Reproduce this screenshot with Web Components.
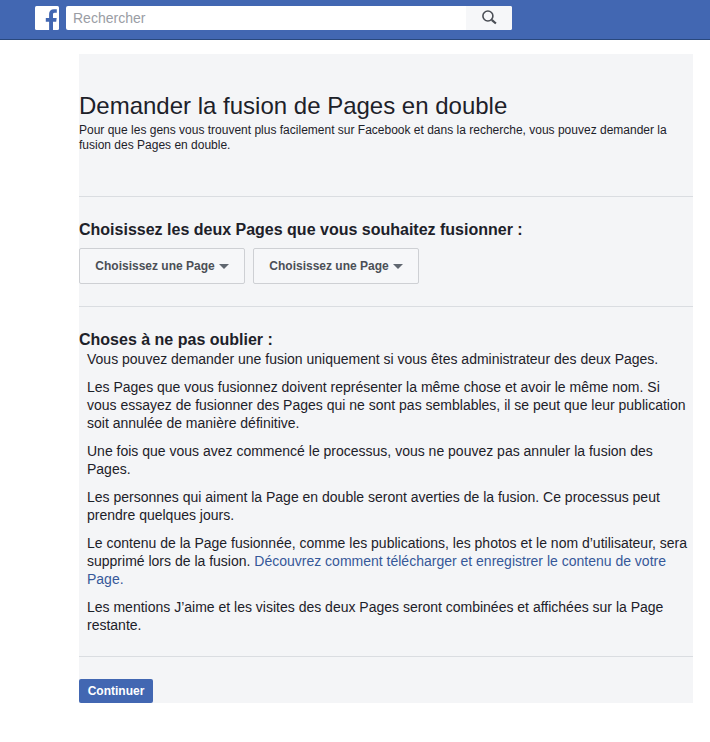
<!DOCTYPE html>
<html lang="fr">
<head>
<meta charset="utf-8">
<title>Demander la fusion de Pages en double</title>
<style>
  html, body { margin: 0; padding: 0; background: #fff; }
  body { font-family: "Liberation Sans", Arial, sans-serif; color: #1d2129; }
</style>
</head>
<body>
<fb-header></fb-header>
<merge-panel>
  <panel-section slot="intro" pad="38px 0 43px">
    <h-title>Demander la fusion de Pages en double</h-title>
    <small-text>Pour que les gens vous trouvent plus facilement sur Facebook et dans la recherche, vous pouvez demander la fusion des Pages en double.</small-text>
  </panel-section>
  <panel-section slot="pick" pad="24px 0 22px" line>
    <h-sub>Choisissez les deux Pages que vous souhaitez fusionner :</h-sub>
    <pick-row>
      <page-select>Choisissez une Page</page-select>
      <page-select>Choisissez une Page</page-select>
    </pick-row>
  </panel-section>
  <panel-section slot="notes" pad="24px 0 12px" line>
    <h-sub>Choses à ne pas oublier :</h-sub>
    <note-list>
      <p>Vous pouvez demander une fusion uniquement si vous êtes administrateur des deux Pages.</p>
      <p>Les Pages que vous fusionnez doivent représenter la même chose et avoir le même nom. Si vous essayez de fusionner des Pages qui ne sont pas semblables, il se peut que leur publication soit annulée de manière définitive.</p>
      <p>Une fois que vous avez commencé le processus, vous ne pouvez pas annuler la fusion des Pages.</p>
      <p>Les personnes qui aiment la Page en double seront averties de la fusion. Ce processus peut prendre quelques jours.</p>
      <p>Le contenu de la Page fusionnée, comme les publications, les photos et le nom d’utilisateur, sera supprimé lors de la fusion. <a>Découvrez comment télécharger et enregistrer le contenu de votre Page.</a></p>
      <p>Les mentions J’aime et les visites des deux Pages seront combinées et affichées sur la Page restante.</p>
    </note-list>
  </panel-section>
  <panel-section slot="foot" pad="22px 0 0" line>
    <blue-button>Continuer</blue-button>
  </panel-section>
</merge-panel>

<script>
function simple(name, css, html) {
  customElements.define(name, class extends HTMLElement {
    constructor() {
      super();
      this.attachShadow({ mode: 'open' });
      this.shadowRoot.innerHTML = '<style>' + css + '</style>' + (html || '<slot></slot>');
    }
  });
}

simple('fb-header', `
  :host { display: flex; box-sizing: border-box; height: 40px; padding: 6px 0 0 35px; gap: 7px;
          background: #4267b2; border-bottom: 1px solid #29487d; }
  .logo { width: 24px; height: 24px; display: block; }
  .search { display: flex; width: 446px; height: 24px; background: #fff; border-radius: 2px; overflow: hidden; }
  .ph { flex: 1; font: 14px/24px "Liberation Sans", Arial, sans-serif; color: #9a9da4; padding-left: 7px; }
  .btn { width: 46px; background: #f6f7f9; display: flex; align-items: center; justify-content: center; }
`, `
  <svg class="logo" viewBox="0 0 24 24">
    <rect width="24" height="24" rx="1.5" fill="#fff"/>
    <path fill="#4267b2" d="M18 24v-8.2h3.2l.5-3.8h-3.7V8.6c0-1.1.3-1.8 1.8-1.8h2V3.3c-.4-.05-1.5-.15-2.9-.15-2.9 0-4.8 1.75-4.8 4.95V12H10.8v3.8h3.3V24z"/>
  </svg>
  <div class="search">
    <div class="ph">Rechercher</div>
    <div class="btn">
      <svg width="16" height="16" viewBox="0 0 16 16" fill="none" stroke="#4b4f56">
        <circle cx="6.9" cy="6" r="5" stroke-width="1.6"/>
        <path d="M10.7 9.8l4.2 3.7" stroke-width="2.2"/>
      </svg>
    </div>
  </div>
`);

simple('merge-panel', `
  :host { display: block; box-sizing: border-box; width: 614px; height: 649px; margin: 14px 0 0 79px; background: #f4f5f7; }
`, `<slot name="intro"></slot><slot name="pick"></slot><slot name="notes"></slot><slot name="foot"></slot>`);

customElements.define('panel-section', class extends HTMLElement {
  constructor() {
    super();
    this.attachShadow({ mode: 'open' });
    const pad = this.getAttribute('pad') || '0';
    const line = this.hasAttribute('line') ? 'border-top: 1px solid #dadde1;' : '';
    this.shadowRoot.innerHTML = '<style>:host { display: block; padding: ' + pad + '; ' + line + ' }</style><slot></slot>';
  }
});

simple('h-title', `
  :host { display: block; font: 24px/28px "Liberation Sans", Arial, sans-serif; color: #1d2129; }
`);
simple('small-text', `
  :host { display: block; font: 12px/15px "Liberation Sans", Arial, sans-serif; color: #1d2129; margin-top: 3px; }
`);
simple('h-sub', `
  :host { display: block; font: bold 16px/18px "Liberation Sans", Arial, sans-serif; color: #1d2129; }
`);
simple('pick-row', `
  :host { display: flex; gap: 8px; margin-top: 9px; }
`);
simple('page-select', `
  :host { display: flex; align-items: center; justify-content: center; gap: 4px; box-sizing: border-box;
          width: 166px; height: 36px; border: 1px solid #ced0d4; border-radius: 2px; background: #f6f7f9;
          font: bold 12px "Liberation Sans", Arial, sans-serif; color: #4b4f56; }
  svg { display: block; }
`, `<slot></slot><svg width="10" height="5" viewBox="0 0 10 5"><path d="M0 0h10L5 5z" fill="#606770"/></svg>`);

customElements.define('note-list', class extends HTMLElement {
  constructor() {
    super();
    this.attachShadow({ mode: 'open' });
    this.shadowRoot.innerHTML = `<style>
      :host { display: block; padding: 1px 0 0 8px; font: 14px/18px "Liberation Sans", Arial, sans-serif; color: #1d2129; }
      ::slotted(p) { margin: 0 0 10px; }
    </style><slot></slot>`;
  }
});

simple('blue-button', `
  :host { display: inline-block; box-sizing: border-box; width: 74px; height: 24px; text-align: center; background: #4267b2;
          border-radius: 2px; font: bold 12px/24px "Liberation Sans", Arial, sans-serif; color: #fff; }
`);
</script>
<style>
  note-list a { color: #365899; }
</style>
</body>
</html>
